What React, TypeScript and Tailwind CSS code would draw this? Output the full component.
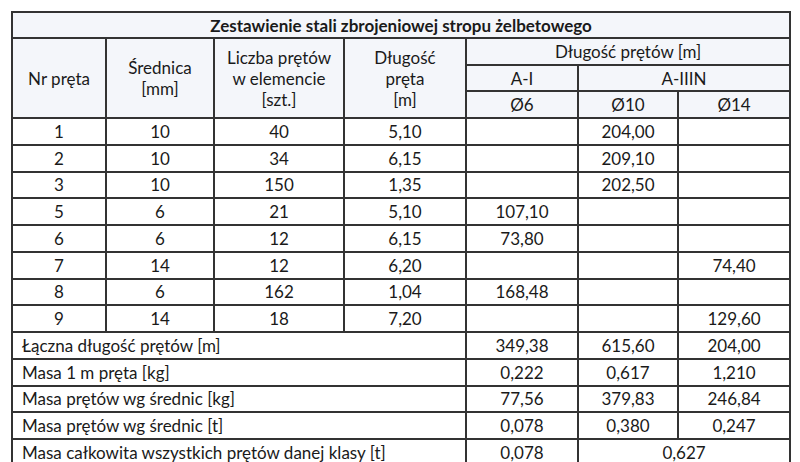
import React from "react";

const data: [string, string, string, string, string, string, string][] = [
  ["1", "10", "40", "5,10", "", "204,00", ""],
  ["2", "10", "34", "6,15", "", "209,10", ""],
  ["3", "10", "150", "1,35", "", "202,50", ""],
  ["5", "6", "21", "5,10", "107,10", "", ""],
  ["6", "6", "12", "6,15", "73,80", "", ""],
  ["7", "14", "12", "6,20", "", "", "74,40"],
  ["8", "6", "162", "1,04", "168,48", "", ""],
  ["9", "14", "18", "7,20", "", "", "129,60"],
];

const summary: [string, string, string, string][] = [
  ["Łączna długość prętów [m]", "349,38", "615,60", "204,00"],
  ["Masa 1 m pręta [kg]", "0,222", "0,617", "1,210"],
  ["Masa prętów wg średnic [kg]", "77,56", "379,83", "246,84"],
  ["Masa prętów wg średnic [t]", "0,078", "0,380", "0,247"],
];

const cell = "border-2 border-[#333333] p-0 text-center align-middle";
const head = "border-2 border-[#333333] p-0 text-center align-middle bg-[#f4f6fa]";

export default function App() {
  return (
    <div
      className="w-[800px] h-[462px] overflow-hidden bg-white pt-[11px] pl-[11px] text-[#1a1a1a] text-[17px] leading-[21px]"
      style={{ fontFamily: "Lato, 'Open Sans', sans-serif" }}
    >
      <table className="table-fixed border-collapse w-[778px]">
        <colgroup>
          <col className="w-[94px]" />
          <col className="w-[108px]" />
          <col className="w-[130px]" />
          <col className="w-[122px]" />
          <col className="w-[112px]" />
          <col className="w-[100px]" />
          <col className="w-[112px]" />
        </colgroup>
        <tbody>
          <tr className="h-[26px]">
            <td colSpan={7} className={head + " font-bold"}>
              Zestawienie stali zbrojeniowej stropu żelbetowego
            </td>
          </tr>
          <tr className="h-[27px]">
            <td rowSpan={3} className={head}>Nr pręta</td>
            <td rowSpan={3} className={head}>
              Średnica
              <br />
              [mm]
            </td>
            <td rowSpan={3} className={head}>
              Liczba prętów
              <br />
              w elemencie
              <br />
              [szt.]
            </td>
            <td rowSpan={3} className={head}>
              Długość
              <br />
              pręta
              <br />
              [m]
            </td>
            <td colSpan={3} className={head}>Długość prętów [m]</td>
          </tr>
          <tr className="h-[26px]">
            <td className={head}>A-I</td>
            <td colSpan={2} className={head}>A-IIIN</td>
          </tr>
          <tr className="h-[27px]">
            <td className={head}>Ø6</td>
            <td className={head}>Ø10</td>
            <td className={head}>Ø14</td>
          </tr>
          {data.map((r, i) => (
            <tr key={i} className="h-[26.75px]">
              {r.map((v, j) => (
                <td key={j} className={cell}>
                  {v}
                </td>
              ))}
            </tr>
          ))}
          {summary.map((r, i) => (
            <tr key={i} className="h-[26.75px]">
              <td colSpan={4} className={cell + " text-left pl-[9px]"}>
                {r[0]}
              </td>
              <td className={cell}>{r[1]}</td>
              <td className={cell}>{r[2]}</td>
              <td className={cell}>{r[3]}</td>
            </tr>
          ))}
          <tr className="h-[27px]">
            <td colSpan={4} className={cell + " text-left pl-[9px]"}>
              Masa całkowita wszystkich prętów danej klasy [t]
            </td>
            <td className={cell}>0,078</td>
            <td colSpan={2} className={cell}>0,627</td>
          </tr>
        </tbody>
      </table>
    </div>
  );
}
